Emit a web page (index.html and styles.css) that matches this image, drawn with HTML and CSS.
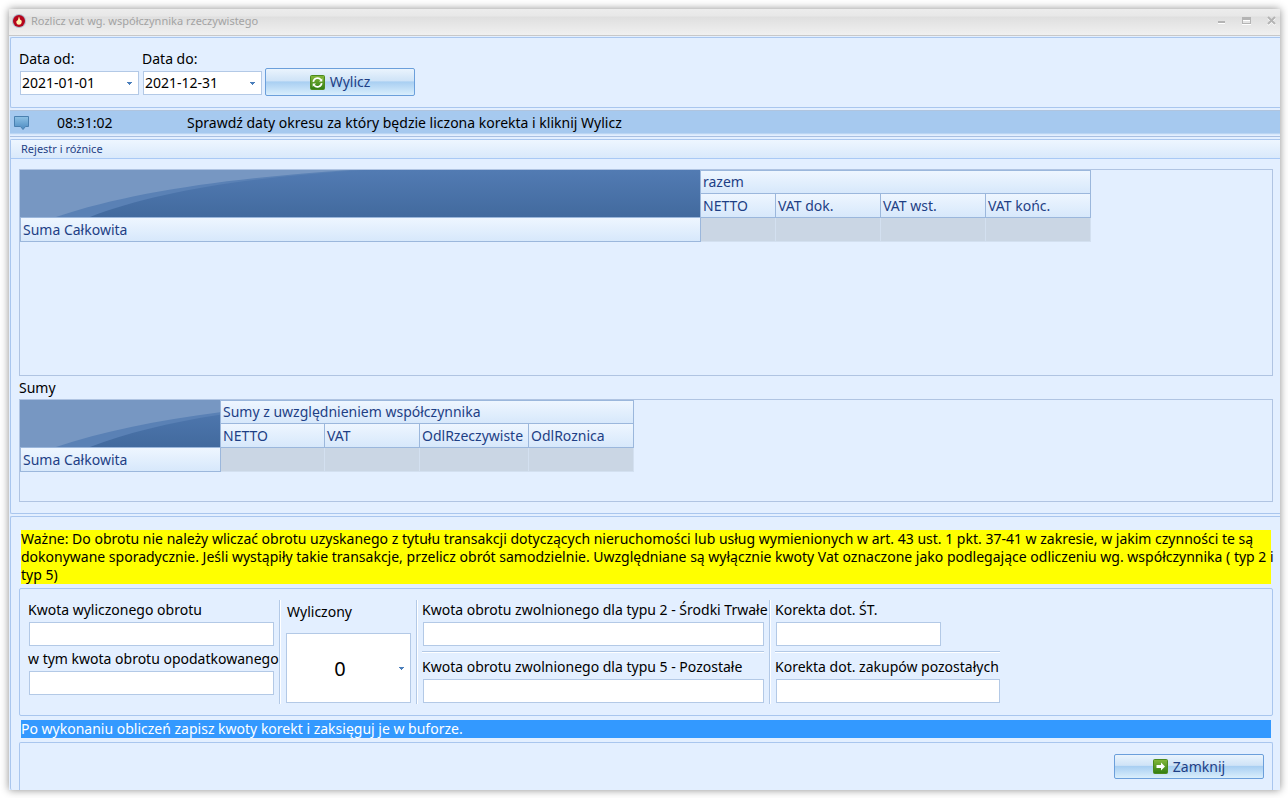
FILE: index.html
```html
<!DOCTYPE html>
<html lang="pl">
<head>
<meta charset="utf-8">
<title>Rozlicz vat wg. współczynnika rzeczywistego</title>
<link rel="stylesheet" href="styles.css">
</head>
<body>
<div class="window">
  <header class="titlebar">
    <svg class="app-icon" width="14" height="14" viewBox="0 0 14 14" aria-hidden="true">
      <circle cx="7" cy="7" r="7" fill="#aebccb"/>
      <circle cx="7" cy="7" r="6" fill="#b5051c"/>
      <path d="M7 2.500 8 5.500c1.500.5 1.900 1.500 1.700 2.800C9.400 10 8.400 10.800 7 10.800S4.500 10 4.300 8.300C4.200 7 5 6.800 5.600 6.200 6.500 5.200 6.300 3.800 7 2.500z" fill="#fff3b0"/>
    </svg>
    <h1 class="title">Rozlicz vat wg. współczynnika rzeczywistego</h1>
    <div class="window-buttons">
      <button type="button" class="win-btn" aria-label="Minimalizuj">
        <svg width="10" height="9"><path d="M1 4h7v2H1z" fill="#b4b4b4"/><path d="M1 6h7v1H1z" fill="#fff"/></svg>
      </button>
      <button type="button" class="win-btn" aria-label="Maksymalizuj">
        <svg width="10" height="9"><path d="M0 0h9v7H0zM1 3v3h7V3z" fill="#b4b4b4" fill-rule="evenodd"/><path d="M1 3h7v1H1zM0 7h9v1H0z" fill="#fff"/></svg>
      </button>
      <button type="button" class="win-btn" aria-label="Zamknij okno">
        <svg width="10" height="10"><path d="M1 2l7 7M8 2l-7 7" stroke="#fff" stroke-width="2"/><path d="M1 1l7 7M8 1l-7 7" stroke="#b4b4b4" stroke-width="2"/></svg>
      </button>
    </div>
  </header>

  <main class="content">
    <section class="panel filters">
      <div class="field">
        <label for="from">Data od:</label>
        <div class="combo">
          <input id="from" type="text" value="2021-01-01">
          <button type="button" class="drop" aria-label="Wybierz datę od"><svg width="5" height="3"><path d="M0 0h5v1H4v1H3v1H2V2H1V1H0z" fill="#4a7ebb"/></svg></button>
        </div>
      </div>
      <div class="field">
        <label for="to">Data do:</label>
        <div class="combo">
          <input id="to" type="text" value="2021-12-31">
          <button type="button" class="drop" aria-label="Wybierz datę do"><svg width="5" height="3"><path d="M0 0h5v1H4v1H3v1H2V2H1V1H0z" fill="#4a7ebb"/></svg></button>
        </div>
      </div>
      <button type="button" class="btn btn-tall">
        <svg width="15" height="15" viewBox="0 0 15 15" aria-hidden="true">
          <defs><linearGradient id="green" x1="0" y1="0" x2="0" y2="1"><stop offset="0" stop-color="#86b93c"/><stop offset="1" stop-color="#2f7d12"/></linearGradient></defs>
          <rect x=".5" y=".5" width="14" height="14" rx="1" fill="url(#green)" stroke="#4c8a1e"/>
          <path d="M3.300 6.800a4.300 4.300 0 0 1 7.600-2.100M11.700 8.200a4.300 4.300 0 0 1-7.600 2.100" fill="none" stroke="#fff" stroke-width="1.700"/>
          <path d="M12.300 3.200v3.300H9zM2.700 11.800V8.500H6z" fill="#fff"/>
        </svg>
        <span>Wylicz</span>
      </button>
    </section>

    <section class="status">
      <svg class="bubble" width="16" height="16" viewBox="0 0 16 16" aria-hidden="true">
        <defs><linearGradient id="blue" x1="0" y1="0" x2="0" y2="1"><stop offset="0" stop-color="#8fc2e6"/><stop offset="1" stop-color="#4c8ac0"/></linearGradient></defs>
        <path d="M.5 1.500h14v10h-3l-2.500 3L6.500 11.500H.500z" fill="url(#blue)" stroke="#4a80b0"/>
      </svg>
      <time>08:31:02</time>
      <span>Sprawdź daty okresu za który będzie liczona korekta i kliknij Wylicz</span>
    </section>

    <section class="group">
      <h2 class="group-title">Rejestr i różnice</h2>
      <div class="group-body">
        <div class="grid-box register">
          <table class="pivot">
            <colgroup><col class="c-680"><col class="c-75"><col class="c-105"><col class="c-105"><col class="c-105"></colgroup>
            <thead>
              <tr>
                <td rowspan="2" class="corner">
                  <svg class="swoosh" aria-hidden="true">
                    <defs>
                      <linearGradient id="deep" x1="0" y1="0" x2="0" y2="1"><stop offset="0" stop-color="#527bb3"/><stop offset="1" stop-color="#426a9e"/></linearGradient>
                    </defs>
                    <rect width="100%" height="47" fill="url(#deep)"/>
                    <path d="M0 47V0H345C220 8 135 22 70 47z" fill="#5a81b5"/>
                    <path d="M0 47V0H330C210 8 110 22 36 47z" fill="#7797c2"/>
                  </svg>
                </td>
                <th colspan="4">razem</th>
              </tr>
              <tr><th>NETTO</th><th>VAT dok.</th><th>VAT wst.</th><th>VAT końc.</th></tr>
            </thead>
            <tbody><tr><th scope="row">Suma Całkowita</th><td></td><td></td><td></td><td></td></tr></tbody>
          </table>
        </div>
        <h3 class="sub-title">Sumy</h3>
        <div class="grid-box sums">
          <table class="pivot">
            <colgroup><col class="c-200"><col class="c-104"><col class="c-95"><col class="c-109"><col class="c-105"></colgroup>
            <thead>
              <tr>
                <td rowspan="2" class="corner">
                  <svg class="swoosh" aria-hidden="true">
                    <rect width="100%" height="47" fill="url(#deep)"/>
                    <path d="M0 47V0H345C220 8 135 22 70 47z" fill="#5a81b5"/>
                    <path d="M0 47V0H330C210 8 110 22 36 47z" fill="#7797c2"/>
                  </svg>
                </td>
                <th colspan="4">Sumy z uwzględnieniem współczynnika</th>
              </tr>
              <tr><th>NETTO</th><th>VAT</th><th>OdlRzeczywiste</th><th>OdlRoznica</th></tr>
            </thead>
            <tbody><tr><th scope="row">Suma Całkowita</th><td></td><td></td><td></td><td></td></tr></tbody>
          </table>
        </div>
      </div>
    </section>

    <section class="panel bottom">
      <p class="warning">Ważne: Do obrotu nie należy wliczać obrotu uzyskanego z tytułu transakcji dotyczących nieruchomości lub usług wymienionych w art. 43 ust. 1 pkt. 37-41 w zakresie, w jakim czynności te są dokonywane sporadycznie. Jeśli wystąpiły takie transakcje, przelicz obrót samodzielnie. Uwzględniane są wyłącznie kwoty Vat oznaczone jako podlegające odliczeniu wg. współczynnika ( typ 2 i typ 5)</p>
      <div class="amounts">
        <div class="col col-turnover">
          <label for="turnover">Kwota wyliczonego obrotu</label>
          <input id="turnover" type="text">
          <label for="taxed">w tym kwota obrotu opodatkowanego</label>
          <input id="taxed" type="text">
        </div>
        <div class="col col-ratio">
          <label for="ratio">Wyliczony</label>
          <div class="combo combo-big">
            <input id="ratio" type="text" value="0">
            <button type="button" class="drop" aria-label="Rozwiń"><svg width="5" height="3"><path d="M0 0h5v1H4v1H3v1H2V2H1V1H0z" fill="#4a7ebb"/></svg></button>
          </div>
        </div>
        <div class="col col-exempt">
          <label for="exempt2">Kwota obrotu zwolnionego dla typu 2 - Środki Trwałe</label>
          <input id="exempt2" type="text">
          <hr>
          <label for="exempt5">Kwota obrotu zwolnionego dla typu 5 - Pozostałe</label>
          <input id="exempt5" type="text">
        </div>
        <div class="col col-correction">
          <label for="corr-st">Korekta dot. ŚT.</label>
          <input id="corr-st" class="short" type="text">
          <hr>
          <label for="corr-other">Korekta dot. zakupów pozostałych</label>
          <input id="corr-other" type="text">
        </div>
      </div>
      <p class="hint">Po wykonaniu obliczeń zapisz kwoty korekt i zaksięguj je w buforze.</p>
      <footer class="actions">
        <button type="button" class="btn">
          <svg width="15" height="15" viewBox="0 0 15 15" aria-hidden="true">
            <rect x=".5" y=".5" width="14" height="14" rx="1" fill="url(#green)" stroke="#4c8a1e"/>
            <path d="M3.500 6H8V3.500l4 4-4 4V9H3.500z" fill="#fff"/>
          </svg>
          <span>Zamknij</span>
        </button>
      </footer>
    </section>
  </main>
</div>
</body>
</html>
```
FILE: styles.css
```css
* { box-sizing: border-box; }
body {
  margin: 0;
  padding: 9px 8px 8px 9px;
  min-height: 100vh;
  display: flex;
  background: #fff;
  color: #000;
  font: 14px/18px "Noto Sans", sans-serif;
}
h1, h2, h3, p { margin: 0; font-weight: normal; }
input, button { font: inherit; color: inherit; }
button { cursor: pointer; }
svg { display: block; flex: none; }

.window {
  flex: 1;
  min-width: 0;
  display: flex;
  flex-direction: column;
  background: #e3efff;
  box-shadow: 0 0 8px rgba(0, 0, 0, .45);
}
.titlebar {
  display: flex;
  align-items: center;
  height: 27px;
  padding: 0 3px 2px;
  gap: 5px;
  border-bottom: 1px solid #c8c8c8;
  background: linear-gradient(#ececec 0, #e8e8e8 7px, #dfdfdf 8px, #f0f0f0 100%);
}
.title { flex: 1; font-size: 11px; line-height: 16px; color: #a3a3a3; }
.window-buttons { display: flex; gap: 15px; }
.win-btn { padding: 0; border: 0; background: none; }

.content { flex: 1; display: flex; flex-direction: column; padding: 1px 0 0 1px; }
.panel {
  border: 1px solid #a9c6ee;
  border-right: 0;
  border-radius: 2px 0 0 2px;
}
.filters {
  display: flex;
  align-items: flex-end;
  gap: 3px;
  height: 71px;
  padding: 0 8px 11px;
}
.field { display: flex; flex-direction: column; gap: 3px; }
.combo {
  display: flex;
  width: 119px;
  height: 24px;
  margin: 0 0 1px 1px;
  border: 1px solid #b3c9e6;
  background: #fff;
}
.combo input {
  flex: 1;
  min-width: 0;
  padding: 0 1px;
  border: 0;
  background: none;
  outline: 0;
}
.drop { width: 17px; padding: 0 6px; border: 0; background: none; }

.btn {
  display: flex;
  align-items: center;
  justify-content: center;
  gap: 5px;
  width: 150px;
  height: 25px;
  padding: 0;
  border: 1px solid #6b9fdb;
  border-radius: 2px;
  background: linear-gradient(#eaf4fd 0, #cfe3f7 45%, #a9cff2 50%, #d9eefc 100%);
  color: #1e3f85;
}
.btn-tall { height: 28px; }

.status {
  display: flex;
  align-items: center;
  height: 27px;
  margin-top: 2px;
  padding: 0 4px 2px;
  border-top: 1px solid #b0c4de;
  border-bottom: 1px solid #a9c0e2;
  background: linear-gradient(#a6c9ef 0, #a6c9ef 22px, #cfe2f8 23px, #e3efff 24px);
}
.bubble { margin-right: 27px; }
.status time { width: 130px; }

.group {
  margin-top: 2px;
  border: 1px solid #a9c6ee;
  border-right: 0;
  border-radius: 2px 0 0 2px;
}
.group-title {
  height: 19px;
  padding: 0 10px;
  border-bottom: 1px solid #a9c9f5;
  background: linear-gradient(#eef6ff, #d9e9fb);
  color: #1e3f85;
  font-size: 11px;
}
.group-body { padding: 10px 7px 11px 8px; }
.grid-box { border: 1px solid #b0c4e2; }
.register { min-height: 207px; }
.sums { min-height: 103px; }
.sub-title { height: 23px; font-size: 14px; line-height: 23px; }

.pivot { table-layout: fixed; width: 0; border-collapse: separate; border-spacing: 0; color: #1e3f85; }
.pivot td, .pivot th {
  height: 24px;
  padding: 0 2px;
  border: 0 solid #9bb7dc;
  border-width: 0 1px 1px 0;
  font-weight: normal;
  text-align: left;
  white-space: nowrap;
}
.pivot th { background: linear-gradient(#eef6ff, #d7e8fb); }
.pivot thead tr:first-child th { border-top-width: 1px; }
.pivot tbody th { border-left-width: 1px; }
.pivot tbody td { background: #cad6e4; border-color: #d3e0f0; }
.pivot .corner { padding: 0; }
.swoosh { width: 100%; height: 47px; }
.c-680 { width: 681px; }
.c-200 { width: 201px; }
.c-109 { width: 109px; }
.c-105 { width: 105px; }
.c-104 { width: 104px; }
.c-95 { width: 95px; }
.c-75 { width: 75px; }

.bottom {
  flex: 1;
  display: flex;
  flex-direction: column;
  margin-top: 2px;
  padding: 13px 7px 0 8px;
  border-bottom: 0;
}
/* The text may run slightly past the yellow fill on the right. */
.warning {
  margin: 0 -3px 0 2px;
  background: linear-gradient(#ff0, #ff0) no-repeat 0 0 / calc(100% - 5px) 100%;
}
.amounts {
  display: flex;
  margin-top: 4px;
  padding: 11px 3px;
  border: 1px solid #a9c6ee;
  border-radius: 2px;
}
.col {
  display: flex;
  flex-direction: column;
  height: 104px;
  padding: 0 5px;
}
.col + .col { border-left: 1px solid #b3c9e6; box-shadow: inset 1px 0 #fff; }
.col label { height: 22px; line-height: 20px; white-space: nowrap; }
.col > input {
  height: 24px;
  margin-left: 1px;
  padding: 0 2px;
  border: 1px solid #b3c9e6;
  background: #fff;
}
.col-turnover { width: 256px; }
.col-turnover label + input + label { margin-top: 3px; }
.col-ratio { width: 137px; padding-left: 6px; }
.col-ratio label { height: 33px; padding-left: 1px; line-height: 24px; }
.combo-big { width: 125px; height: 70px; margin: 0; }
.combo-big input { padding: 0 1px; font-size: 20px; text-align: center; }
.col-exempt { width: 353px; }
.col-correction { width: 236px; }
.col hr { width: 100%; height: 2px; margin: 5px 0 4px; border: 0; background: #b3c9e6; border-bottom: 1px solid #fff; }
.col .short { width: 165px; }

.hint { margin: 4px 2px 0; background: #39f; color: #fff; }
.actions {
  flex: 1;
  display: flex;
  justify-content: flex-end;
  min-height: 48px;
  margin-top: 4px;
  padding: 11px 8px;
  border: 1px solid #a9c6ee;
  border-bottom: 0;
  border-radius: 2px 2px 0 0;
}
```
